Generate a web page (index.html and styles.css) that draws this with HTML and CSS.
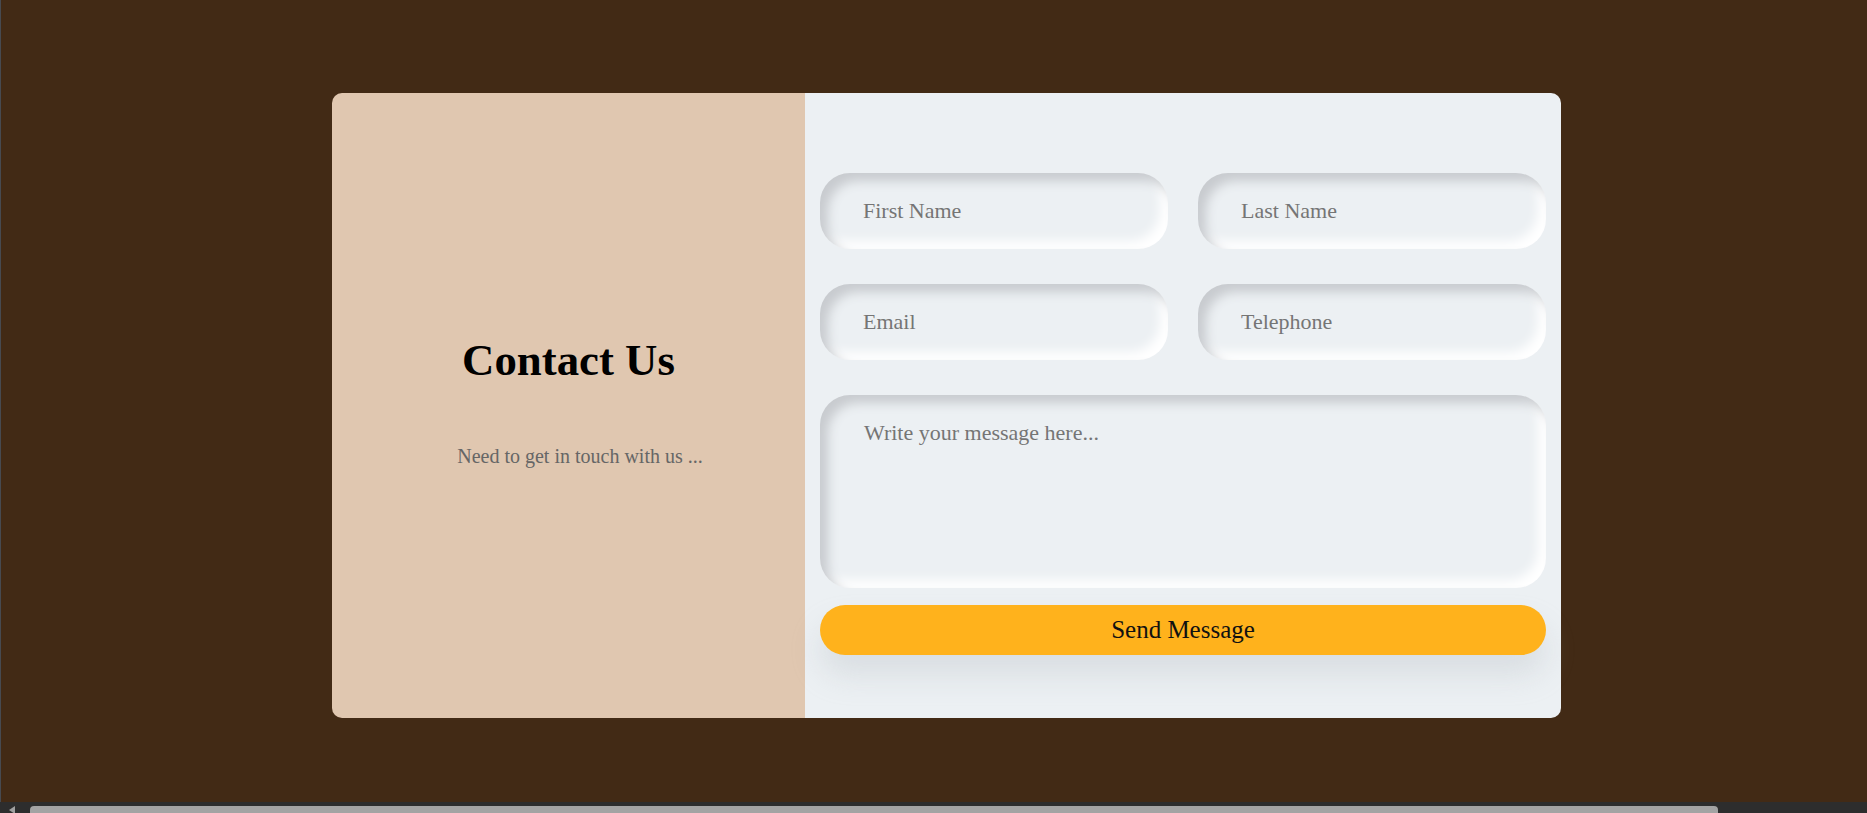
FILE: index.html
```html
<!DOCTYPE html>
<html lang="en">
<head>
<meta charset="utf-8">
<title>Contact Us</title>
<link rel="stylesheet" href="styles.css">
</head>
<body>
<main class="page">
  <section class="card">
    <div class="intro">
      <h1 class="intro-title">Contact Us</h1>
      <p class="intro-text">Need to get in touch with us ...</p>
    </div>
    <form class="form-panel">
      <div class="field-row">
        <input class="field" type="text" placeholder="First Name">
        <input class="field" type="text" placeholder="Last Name">
      </div>
      <div class="field-row">
        <input class="field" type="text" placeholder="Email">
        <input class="field" type="text" placeholder="Telephone">
      </div>
      <div class="message-group">
        <textarea class="message" placeholder="Write your message here..."></textarea>
        <button class="send" type="button">Send Message</button>
      </div>
    </form>
  </section>
</main>
<div class="hscroll">
  <span class="hscroll-arrow"></span>
  <span class="hscroll-thumb"></span>
</div>
</body>
</html>
```
FILE: styles.css
```css
html, body {
  margin: 0;
  padding: 0;
}

body {
  background: #422a15;
  min-height: 100vh;
  box-shadow: inset 1px 0 #474a50;
  font-family: "Liberation Serif", "Times New Roman", serif;
  overflow: hidden;
}

.page {
  padding: 93px 0 0 332px;
}

.card {
  display: flex;
  width: 1229px;
  height: 625px;
}

.intro {
  width: 473px;
  flex: none;
  background: #e0c7b0;
  border-radius: 10px 0 0 10px;
  display: flex;
  flex-direction: column;
  justify-content: center;
  align-items: center;
  padding-bottom: 10px;
  box-sizing: border-box;
}

.intro-title {
  margin: 0;
  font-size: 44.8px;
  font-weight: bold;
  color: #000;
  line-height: normal;
}

.intro-text {
  margin: 59px 0 0;
  padding-left: 23px;
  font-size: 20px;
  color: #666;
  line-height: normal;
}

.form-panel {
  flex: 1;
  background: #ecf0f3;
  border-radius: 0 10px 10px 0;
  padding: 80px 15px 0;
  display: flex;
  flex-direction: column;
  gap: 35px;
}

.field-row {
  display: grid;
  grid-template-columns: 348px 348px;
  column-gap: 30px;
}

.field,
.message {
  border: none;
  outline: none;
  background: #ecf0f3;
  border-radius: 30px;
  box-shadow: inset 8px 8px 11px #c8cbcf, inset -8px -8px 11px #ffffff;
  font-family: "Liberation Serif", "Times New Roman", serif;
  font-size: 22px;
  color: #333;
  box-sizing: border-box;
}

.field {
  height: 76px;
  padding: 0 20px 0 43px;
}

.field::placeholder,
.message::placeholder {
  font-family: "Liberation Serif", "Times New Roman", serif;
  color: #757575;
}

.message-group {
  display: flex;
  flex-direction: column;
  gap: 17px;
}

.message {
  display: block;
  width: 100%;
  height: 193px;
  padding: 25px 20px 0 44px;
  resize: none;
}

.send {
  height: 50px;
  border: none;
  border-radius: 25px;
  background: #ffb21c;
  color: #111;
  font-family: "Liberation Serif", "Times New Roman", serif;
  font-size: 25px;
  box-shadow: 0 20px 30px rgba(175, 182, 190, 0.3);
  cursor: pointer;
}

.hscroll {
  position: fixed;
  left: 0;
  right: 0;
  bottom: 0;
  height: 11px;
  background: #2d2d2d;
  overflow: hidden;
}

.hscroll-arrow {
  position: absolute;
  left: 9px;
  top: 4px;
  width: 0;
  height: 0;
  border-top: 4px solid transparent;
  border-bottom: 4px solid transparent;
  border-right: 6px solid #a0a0a0;
}

.hscroll-thumb {
  position: absolute;
  left: 30px;
  top: 4px;
  width: 1688px;
  height: 12px;
  border-radius: 4px;
  background: #a3a3a3;
}
```
